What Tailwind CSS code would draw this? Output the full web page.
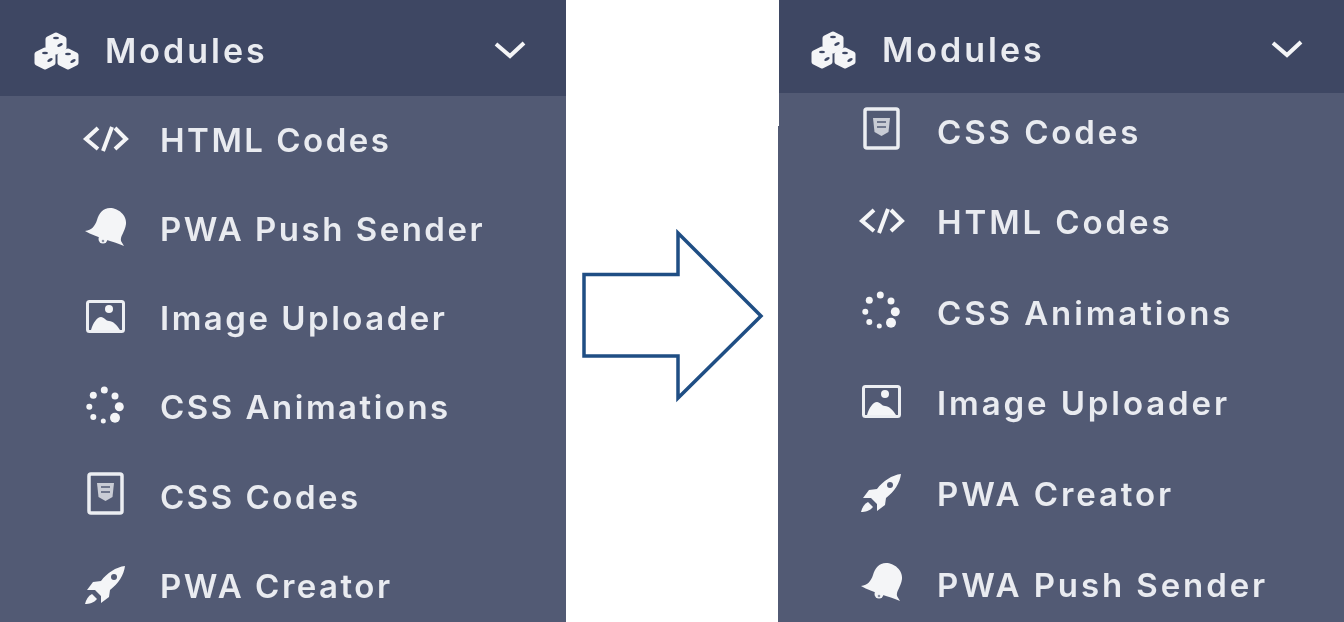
<!DOCTYPE html>
<html lang="en">
<head>
    <meta charset="UTF-8">
    <title>Modules menu reorder</title>
    <script src="https://cdn.jsdelivr.net/npm/@tailwindcss/browser@4"></script>
</head>
<body class="h-[622px] overflow-hidden bg-white font-['Inter',sans-serif] text-[#e9ebf0]">
    <!-- Icon set -->
    <svg class="hidden">
        <symbol id="cubes" viewBox="0 0 48 44" overflow="visible">
            <g fill="#f4f5f7" stroke="#f4f5f7" stroke-width="5" stroke-linejoin="round">
                <path d="M24 6l8 4v9l-8 4-8-4v-9z"/>
                <path d="M13 21l8 4v9l-8 4-8-4v-9z"/>
                <path d="M36 22l8 4v8l-8 4-8-4v-8z"/>
            </g>
            <g fill="#3e4763">
                <ellipse cx="28" cy="16" rx="3" ry="1.500" transform="rotate(-25 28 16)"/>
                <ellipse cx="18" cy="31" rx="3" ry="1.500" transform="rotate(-30 18 31)"/>
                <ellipse cx="41" cy="32" rx="3" ry="1.500" transform="rotate(-30 41 32)"/>
                <ellipse cx="24" cy="9" rx="3" ry="1.200"/>
                <ellipse cx="13" cy="24" rx="3" ry="1.200"/>
                <ellipse cx="36" cy="25" rx="3" ry="1.200"/>
            </g>
        </symbol>
        <symbol id="code" viewBox="0 0 44 44" overflow="visible">
            <path d="M15 9L3 20l12 10M29 8l-9 24M32 9l11 11-11 10" fill="none" stroke="#f4f5f7" stroke-width="4"/>
        </symbol>
        <symbol id="bell" viewBox="0 0 44 44" overflow="visible">
            <path d="M2 23c7-1 10-5 12-11C16 5 20 0 27 0c8 0 17 7 16 16-1 8-6 12-5 17l3 5C30 33 14 30 2 23z" fill="#f4f5f7"/>
            <circle cx="20" cy="31" r="4.500" fill="#f4f5f7"/>
            <circle cx="20" cy="33" r="1.300" fill="#8a90a3"/>
        </symbol>
        <symbol id="image" viewBox="0 0 44 44" overflow="visible">
            <rect x="4.500" y="4.500" width="36" height="30" rx="2" fill="none" stroke="#eceef2" stroke-width="3"/>
            <circle cx="26" cy="12" r="4" fill="#f4f5f7"/>
            <path d="M8 33c2-7 6-13 10-13 3 0 5 4 8 4 4 0 8 4 11 9z" fill="#f4f5f7"/>
        </symbol>
        <symbol id="loader" viewBox="0 0 44 44" overflow="visible">
            <g fill="#f4f5f7">
                <circle cx="21.300" cy="4" r="3.500"/>
                <circle cx="32" cy="10" r="3.500"/>
                <circle cx="36.300" cy="20.700" r="4.500"/>
                <circle cx="32" cy="31.700" r="5"/>
                <circle cx="20.300" cy="35" r="2.500"/>
                <circle cx="10.300" cy="31" r="3"/>
                <circle cx="6.300" cy="20.700" r="3"/>
                <circle cx="10.300" cy="9.300" r="3.500"/>
            </g>
        </symbol>
        <symbol id="cssfile" viewBox="0 0 44 44" overflow="visible">
            <rect x="6" y="-1" width="33" height="39" rx="2" fill="none" stroke="#eceef2" stroke-width="3.500"/>
            <path d="M14 8h17l-1.500 14-7 4-7-4z" fill="#c9ccd5"/>
            <path d="M18 12h9M18 17h9" stroke="#525a74" stroke-width="1.500"/>
        </symbol>
        <symbol id="rocket" viewBox="0 0 44 44" overflow="visible">
            <path d="M42 1c-9 1-18 7-24 15l-8 1-6 8h8l6 6v7l8-6 1-7c8-6 14-15 15-24z" fill="#f4f5f7"/>
            <circle cx="31" cy="12" r="3" fill="#525a74"/>
            <path d="M9 29l5 5c-3 4-8 5-12 5 1-4 3-8 7-10z" fill="#f4f5f7"/>
        </symbol>
    </svg>

    <div class="flex h-full">
        <!-- Before -->
        <section class="w-[566px] h-full bg-[#525a74] overflow-hidden">
            <header class="flex items-center h-[96px] bg-[#3e4763] pl-[32px] pr-[40px] pt-[5px]">
                <svg class="w-[48px] h-[44px] shrink-0 overflow-visible blur-[0.7px]"><use href="#cubes"/></svg>
                <span class="ml-[25px] text-[34px] font-semibold tracking-[3px] blur-[0.7px]">Modules</span>
                <svg class="ml-auto w-[32px] h-[20px] blur-[0.7px]" viewBox="0 0 32 20"><path d="M2 3l14 12L30 2" fill="none" stroke="#f4f5f7" stroke-width="4"/></svg>
            </header>
            <ul class="text-[33px] font-semibold tracking-[2.5px] blur-[0.7px]">
                <li class="flex items-center h-[89.2px] pl-[83px]"><svg class="w-[44px] h-[44px] shrink-0 overflow-visible"><use href="#code"/></svg><span class="ml-[33px]">HTML Codes</span></li>
                <li class="flex items-center h-[89.2px] pl-[83px]"><svg class="w-[44px] h-[44px] shrink-0 overflow-visible"><use href="#bell"/></svg><span class="ml-[33px]">PWA Push Sender</span></li>
                <li class="flex items-center h-[89.2px] pl-[83px]"><svg class="w-[44px] h-[44px] shrink-0 overflow-visible"><use href="#image"/></svg><span class="ml-[33px]">Image Uploader</span></li>
                <li class="flex items-center h-[89.2px] pl-[83px]"><svg class="w-[44px] h-[44px] shrink-0 overflow-visible"><use href="#loader"/></svg><span class="ml-[33px]">CSS Animations</span></li>
                <li class="flex items-center h-[89.2px] pl-[83px]"><svg class="w-[44px] h-[44px] shrink-0 overflow-visible"><use href="#cssfile"/></svg><span class="ml-[33px]">CSS Codes</span></li>
                <li class="flex items-center h-[89.2px] pl-[83px]"><svg class="w-[44px] h-[44px] shrink-0 overflow-visible"><use href="#rocket"/></svg><span class="ml-[33px]">PWA Creator</span></li>
            </ul>
        </section>

        <!-- Arrow -->
        <div class="w-[212px] shrink-0 flex items-center justify-center pt-[9px]">
            <svg class="w-[182px] h-[170px] overflow-visible" viewBox="0 0 182 170">
                <path d="M3 43.500h94V2l83 83-83 82v-42H3z" fill="#fff" stroke="#1f4e84" stroke-width="3.500"/>
            </svg>
        </div>

        <!-- After -->
        <section class="relative flex-1 h-full bg-[#525a74] overflow-hidden">
            <div class="absolute left-0 top-0 w-px h-[126px] bg-white"></div>
            <header class="flex items-center h-[93px] ml-px bg-[#3e4763] pl-[30px] pr-[41px] pt-[6px]">
                <svg class="w-[48px] h-[44px] shrink-0 overflow-visible blur-[0.7px]"><use href="#cubes"/></svg>
                <span class="ml-[25px] text-[34px] font-semibold tracking-[3px] blur-[0.7px]">Modules</span>
                <svg class="ml-auto w-[32px] h-[20px] blur-[0.7px]" viewBox="0 0 32 20"><path d="M2 3l14 12L30 2" fill="none" stroke="#f4f5f7" stroke-width="4"/></svg>
            </header>
            <ul class="text-[33px] font-semibold tracking-[2.9px] -mt-[6px] blur-[0.7px]">
                <li class="flex items-center h-[90.6px] pl-[81px]"><svg class="w-[44px] h-[44px] shrink-0 overflow-visible"><use href="#cssfile"/></svg><span class="ml-[34px]">CSS Codes</span></li>
                <li class="flex items-center h-[90.6px] pl-[81px]"><svg class="w-[44px] h-[44px] shrink-0 overflow-visible"><use href="#code"/></svg><span class="ml-[34px]">HTML Codes</span></li>
                <li class="flex items-center h-[90.6px] pl-[81px]"><svg class="w-[44px] h-[44px] shrink-0 overflow-visible"><use href="#loader"/></svg><span class="ml-[34px]">CSS Animations</span></li>
                <li class="flex items-center h-[90.6px] pl-[81px]"><svg class="w-[44px] h-[44px] shrink-0 overflow-visible"><use href="#image"/></svg><span class="ml-[34px]">Image Uploader</span></li>
                <li class="flex items-center h-[90.6px] pl-[81px]"><svg class="w-[44px] h-[44px] shrink-0 overflow-visible"><use href="#rocket"/></svg><span class="ml-[34px]">PWA Creator</span></li>
                <li class="flex items-center h-[90.6px] pl-[81px]"><svg class="w-[44px] h-[44px] shrink-0 overflow-visible"><use href="#bell"/></svg><span class="ml-[34px]">PWA Push Sender</span></li>
            </ul>
        </section>
    </div>
</body>
</html>
